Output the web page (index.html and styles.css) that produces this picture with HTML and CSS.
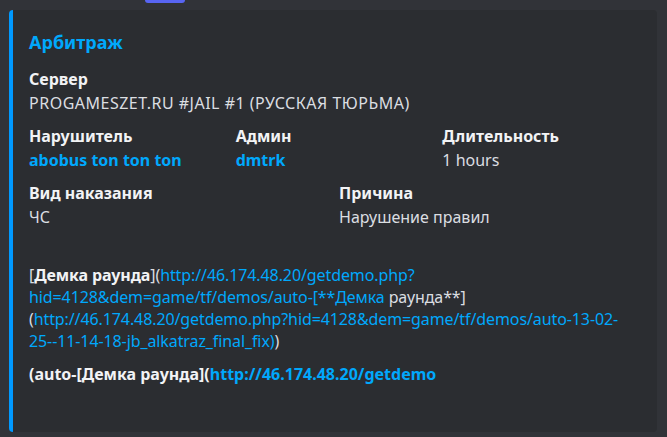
FILE: index.html
```html
<!DOCTYPE html>
<html lang="ru">
<head>
    <meta charset="UTF-8">
    <title>Арбитраж</title>
    <link rel="stylesheet" href="styles.css">
</head>
<body>
    <div class="top-strip">
        <div class="button-stub"></div>
    </div>
    <article class="embed">
        <h2 class="embed-title">Арбитраж</h2>
        <div class="fields">
            <div class="field full">
                <div class="field-name">Сервер</div>
                <div class="field-value caps">PROGAMESZET.RU #JAIL #1 (РУССКАЯ ТЮРЬМА)</div>
            </div>
            <div class="field third">
                <div class="field-name">Нарушитель</div>
                <div class="field-value mention">abobus ton ton ton</div>
            </div>
            <div class="field third">
                <div class="field-name">Админ</div>
                <div class="field-value mention">dmtrk</div>
            </div>
            <div class="field third">
                <div class="field-name">Длительность</div>
                <div class="field-value">1 hours</div>
            </div>
            <div class="field half">
                <div class="field-name">Вид наказания</div>
                <div class="field-value">ЧС</div>
            </div>
            <div class="field half">
                <div class="field-name">Причина</div>
                <div class="field-value">Нарушение правил</div>
            </div>
        </div>
        <p class="description">
            [<b>Демка раунда</b>](<a href="#">http://46.174.48.20/getdemo.php?</a><br>
            <a href="#">hid=4128&amp;dem=game/tf/demos/auto-[**Демка</a> раунда**]<br>
            (<a href="#">http://46.174.48.20/getdemo.php?hid=4128&amp;dem=game/tf/demos/auto-13-02-</a><br>
            <a href="#">25--11-14-18-jb_alkatraz_final_fix)</a>)
        </p>
        <p class="footer-line">(auto-[Демка раунда](<a href="#">http://46.174.48.20/getdemo</a></p>
    </article>
</body>
</html>
```

FILE: styles.css
```css
body {
    margin: 0;
    padding: 0;
    width: 667px;
    height: 437px;
    overflow: hidden;
    background: #313338;
    font-family: "Noto Sans", sans-serif;
    font-size: 16px;
    color: #dbdee1;
}
.top-strip {
    height: 3px;
    padding-left: 145px;
}
.button-stub {
    width: 40px;
    height: 3px;
    background: #5865f2;
    border-radius: 0 0 6px 6px;
}
.embed {
    margin: 7px 0 0 9px;
    width: 620px;
    height: 398px;
    padding: 20px 8px 4px 16px;
    background: #2b2d31;
    border-left: 4px solid #0099ff;
    border-radius: 4px;
}
.embed-title {
    margin: 0;
    font-size: 18px;
    line-height: 24px;
    font-weight: 700;
    color: #00a8fc;
}
.fields {
    display: grid;
    grid-template-columns: repeat(6, 1fr);
    row-gap: 9px;
    margin-top: 13px;
}
.field {
    line-height: 24px;
}
.field.full {
    grid-column: span 6;
}
.field.third {
    grid-column: span 2;
}
.field.half {
    grid-column: span 3;
}
.field-name {
    font-weight: 700;
    color: #f2f3f5;
}
.field-value {
    white-space: nowrap;
}
.field-value.caps {
    letter-spacing: 0.5px;
}
.field-value.mention {
    font-weight: 700;
    color: #00a8fc;
}
.description {
    margin: 35px 0 0;
    line-height: 22px;
    letter-spacing: -0.1px;
    white-space: nowrap;
}
.description b {
    color: #f2f3f5;
}
a {
    color: #00a8fc;
    text-decoration: none;
}
.footer-line {
    margin: 11px 0 0;
    line-height: 22px;
    font-weight: 700;
    color: #f2f3f5;
    white-space: nowrap;
}
```
